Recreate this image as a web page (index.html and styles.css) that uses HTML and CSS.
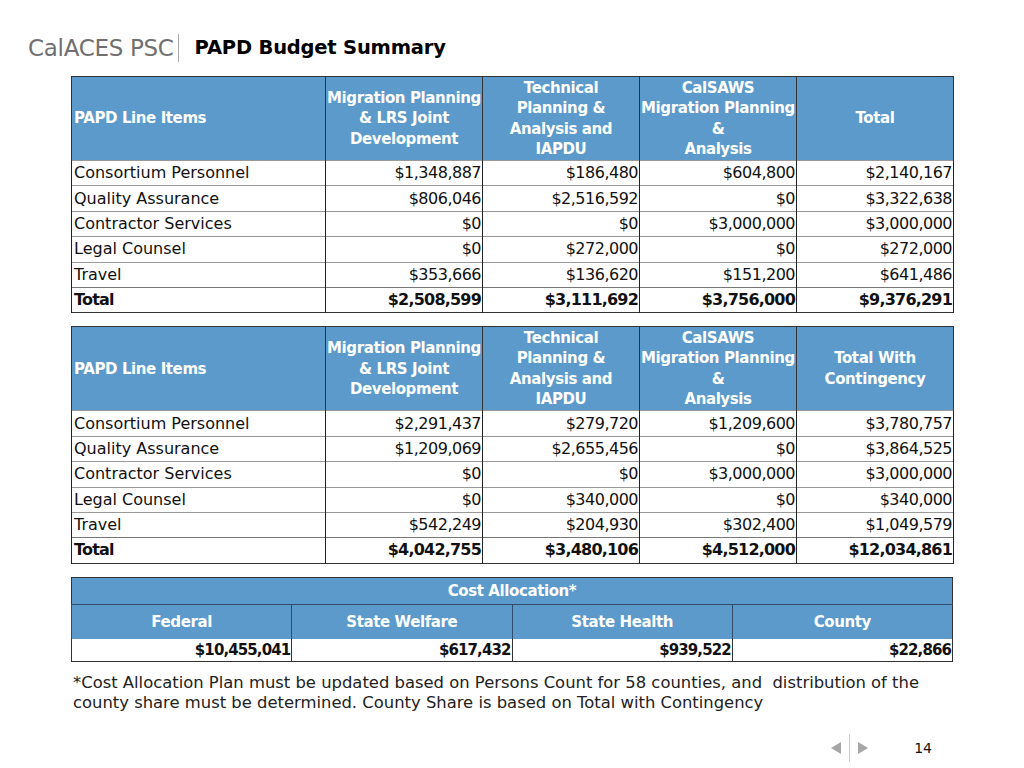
FILE: index.html
```html
<!DOCTYPE html>
<html lang="en">
<head>
<meta charset="utf-8">
<title>PAPD Budget Summary</title>
<link rel="stylesheet" href="styles.css">
</head>
<body>
<div class="slide">
  <header class="title-bar">
    <span class="brand">CalACES PSC</span>
    <span class="divider"></span>
    <h1 class="title">PAPD Budget Summary</h1>
  </header>

  <main class="content">
    <table class="budget">
      <colgroup>
        <col class="c-item"><col class="c-num"><col class="c-num"><col class="c-num"><col class="c-num">
      </colgroup>
      <thead>
        <tr>
          <th class="left">PAPD Line Items</th>
          <th>Migration Planning<br>&amp; LRS Joint<br>Development</th>
          <th>Technical<br>Planning &amp;<br>Analysis and<br>IAPDU</th>
          <th>CalSAWS<br>Migration Planning<br>&amp;<br>Analysis</th>
          <th>Total</th>
        </tr>
      </thead>
      <tbody>
        <tr><td>Consortium Personnel</td><td>$1,348,887</td><td>$186,480</td><td>$604,800</td><td>$2,140,167</td></tr>
        <tr><td>Quality Assurance</td><td>$806,046</td><td>$2,516,592</td><td>$0</td><td>$3,322,638</td></tr>
        <tr><td>Contractor Services</td><td>$0</td><td>$0</td><td>$3,000,000</td><td>$3,000,000</td></tr>
        <tr><td>Legal Counsel</td><td>$0</td><td>$272,000</td><td>$0</td><td>$272,000</td></tr>
        <tr><td>Travel</td><td>$353,666</td><td>$136,620</td><td>$151,200</td><td>$641,486</td></tr>
        <tr class="total"><td>Total</td><td>$2,508,599</td><td>$3,111,692</td><td>$3,756,000</td><td>$9,376,291</td></tr>
      </tbody>
    </table>

    <table class="budget">
      <colgroup>
        <col class="c-item"><col class="c-num"><col class="c-num"><col class="c-num"><col class="c-num">
      </colgroup>
      <thead>
        <tr>
          <th class="left">PAPD Line Items</th>
          <th>Migration Planning<br>&amp; LRS Joint<br>Development</th>
          <th>Technical<br>Planning &amp;<br>Analysis and<br>IAPDU</th>
          <th>CalSAWS<br>Migration Planning<br>&amp;<br>Analysis</th>
          <th>Total With<br>Contingency</th>
        </tr>
      </thead>
      <tbody>
        <tr><td>Consortium Personnel</td><td>$2,291,437</td><td>$279,720</td><td>$1,209,600</td><td>$3,780,757</td></tr>
        <tr><td>Quality Assurance</td><td>$1,209,069</td><td>$2,655,456</td><td>$0</td><td>$3,864,525</td></tr>
        <tr><td>Contractor Services</td><td>$0</td><td>$0</td><td>$3,000,000</td><td>$3,000,000</td></tr>
        <tr><td>Legal Counsel</td><td>$0</td><td>$340,000</td><td>$0</td><td>$340,000</td></tr>
        <tr><td>Travel</td><td>$542,249</td><td>$204,930</td><td>$302,400</td><td>$1,049,579</td></tr>
        <tr class="total"><td>Total</td><td>$4,042,755</td><td>$3,480,106</td><td>$4,512,000</td><td>$12,034,861</td></tr>
      </tbody>
    </table>

    <table class="alloc">
      <thead>
        <tr class="alloc-title"><th colspan="4">Cost Allocation*</th></tr>
        <tr class="alloc-head"><th>Federal</th><th>State Welfare</th><th>State Health</th><th>County</th></tr>
      </thead>
      <tbody>
        <tr><td>$10,455,041</td><td>$617,432</td><td>$939,522</td><td>$22,866</td></tr>
      </tbody>
    </table>

    <p class="note">*Cost Allocation Plan must be updated based on Persons Count for 58 counties, and&nbsp; distribution of the county share must be determined. County Share is based on Total with Contingency</p>
  </main>

  <footer class="slide-footer">
    <nav class="pager">
      <span class="arrow prev"></span>
      <span class="sep"></span>
      <span class="arrow next"></span>
    </nav>
    <span class="page-no">14</span>
  </footer>
</div>
</body>
</html>
```

FILE: styles.css
```css
html, body {
  margin: 0;
  padding: 0;
  background: #ffffff;
}

.slide {
  width: 1024px;
  height: 768px;
  font-family: "DejaVu Sans", "Liberation Sans", sans-serif;
  color: #111;
  overflow: hidden;
}

.title-bar {
  display: flex;
  align-items: center;
  height: 40px;
  padding: 28px 0 0 28px;
  box-sizing: content-box;
}

.brand {
  font-size: 23px;
  color: #707070;
  letter-spacing: -0.3px;
  line-height: 1;
}

.divider {
  width: 1px;
  height: 28px;
  background: #a6a6a6;
  margin: 0 16px 0 4px;
}

.title {
  margin: 0;
  font-size: 19.5px;
  font-weight: bold;
  color: #000;
  line-height: 1;
  letter-spacing: -0.2px;
}

.content {
  padding: 8px 0 0 71px;
  width: 882px;
}

table {
  border-collapse: collapse;
  table-layout: fixed;
  width: 882px;
}

.c-item { width: 254px; }
.c-num { width: 157px; }

.budget {
  margin-bottom: 13px;
  border: 1px solid #333;
}

.budget th {
  background: #5b9acb;
  color: #fff;
  font-weight: bold;
  font-size: 15px;
  line-height: 20.5px;
  height: 83px;
  padding: 0;
  text-align: center;
  border-left: 1px solid #333;
  border-right: 1px solid #333;
  letter-spacing: -0.4px;
}

.budget th.left {
  text-align: left;
  padding-left: 2px;
}

.budget td {
  font-size: 16px;
  height: 24.4px;
  line-height: 20px;
  padding: 0 1px 0 2px;
  text-align: right;
  border-left: 1px solid #222;
  border-right: 1px solid #222;
  border-top: 1px solid #999;
  white-space: nowrap;
  letter-spacing: -0.5px;
}

.budget td:first-child {
  text-align: left;
  letter-spacing: 0;
}

.budget tr.total td {
  font-weight: bold;
  border-top: 1px solid #777;
  letter-spacing: -0.8px;
}

.alloc {
  border: 1px solid #333;
}

.alloc th {
  background: #5b9acb;
  color: #fff;
  font-weight: bold;
  font-size: 15px;
  padding: 0;
  text-align: center;
  letter-spacing: -0.4px;
}

.alloc-title th {
  height: 26px;
  border-bottom: 1px solid #2f4d6a;
}

.alloc-head th {
  height: 34px;
  border-left: 1px solid #2f4d6a;
}

.alloc td {
  font-size: 15px;
  font-weight: bold;
  height: 22px;
  padding: 0 1px 0 0;
  text-align: right;
  border-left: 1px solid #333;
  letter-spacing: -0.9px;
}

.note {
  margin: 11px 0 0 2px;
  font-size: 16.4px;
  line-height: 20px;
  color: #222;
  letter-spacing: 0;
}

.slide-footer {
  display: flex;
  align-items: center;
  justify-content: flex-end;
  margin-top: 20px;
  padding-right: 92px;
  height: 30px;
}

.pager {
  display: flex;
  align-items: center;
  gap: 8px;
  margin-right: 46px;
}

.arrow {
  width: 0;
  height: 0;
  border-top: 6px solid transparent;
  border-bottom: 6px solid transparent;
}

.arrow.prev {
  border-right: 10px solid #a6a6a6;
}

.arrow.next {
  border-left: 10px solid #a6a6a6;
}

.sep {
  width: 1px;
  height: 28px;
  background: #c8c8c8;
}

.page-no {
  font-size: 14px;
  color: #111;
}
```
